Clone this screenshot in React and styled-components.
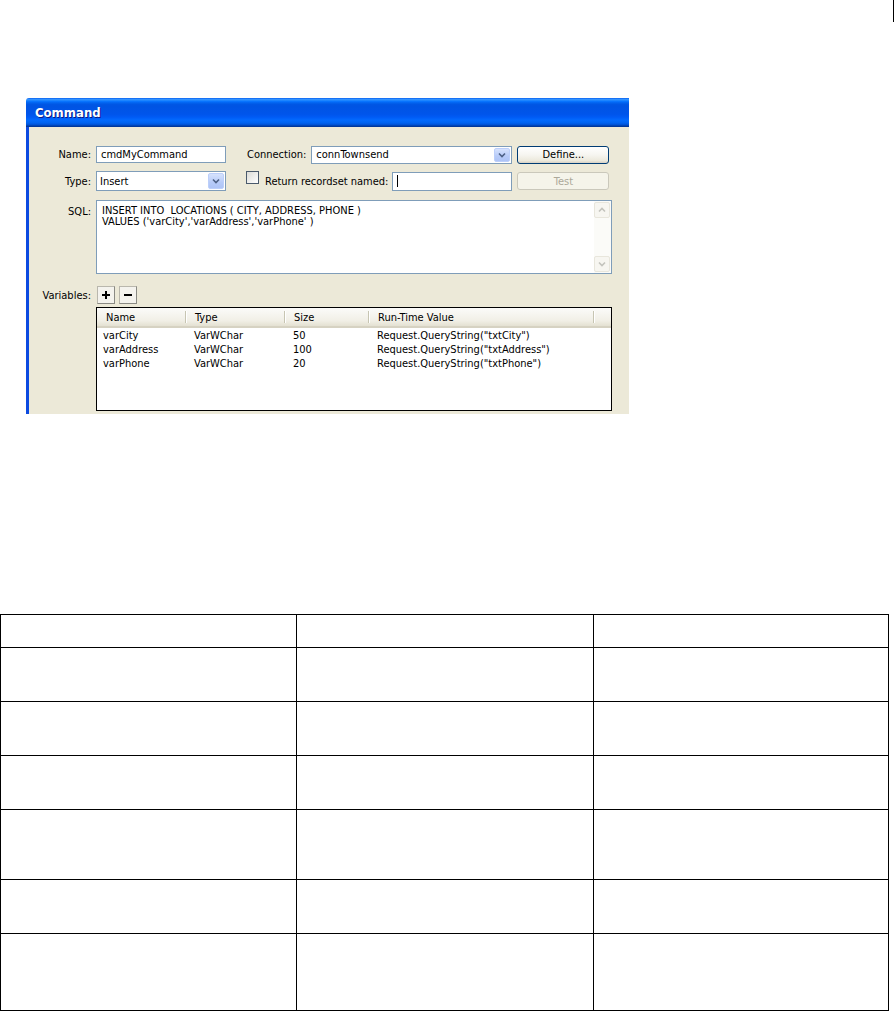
import React from "react";
import styled, { createGlobalStyle } from "styled-components";

const GlobalStyle = createGlobalStyle`
  html, body { margin: 0; padding: 0; background: #ffffff; }
  body { font-family: "DejaVu Sans Condensed", "DejaVu Sans", sans-serif; font-stretch: semi-condensed; }
  #root { width: 895px; }
`;

const UI_FONT = `"DejaVu Sans Condensed", "DejaVu Sans", sans-serif`;

const Page = styled.div`
  width: 895px;
  display: flex;
  flex-direction: column;
`;

const EdgeMark = styled.div`
  width: 1px;
  height: 22px;
  margin-left: 893px;
  background: #000;
`;

const Dialog = styled.div`
  width: 603px;
  margin: 76px 0 0 26px;
  display: flex;
  flex-direction: column;
  font-family: ${UI_FONT};
  font-size: 11px;
  color: #000;
`;

const TitleBar = styled.div`
  height: 29px;
  border-top-left-radius: 3px;
  display: flex;
  align-items: center;
  padding-left: 9px;
  color: #fff;
  font-weight: bold;
  font-size: 13px;
  text-shadow: 1px 1px 0 #0a1883;
  background: linear-gradient(
    #0058ee 0%, #3593ff 4%, #288eff 7%, #127dff 10%, #036ffc 13%,
    #0262ee 17%, #0057e5 22%, #0054e3 28%, #0055eb 56%, #005bf5 66%,
    #026afe 76%, #0062ef 86%, #0052d6 92%, #0040ab 96%, #003092 100%
  );
`;

const DialogBody = styled.div`
  background: #ece9d8;
  border-left: 3px solid #0c4ae0;
  padding: 18px 0 3px 0;
  display: flex;
  flex-direction: column;
`;

const FormRow = styled.div`
  display: flex;
  align-items: ${(p) => p.$align || "center"};
  height: ${(p) => p.$h}px;
  margin-top: ${(p) => p.$mt || 0}px;
`;

const FieldLabel = styled.div`
  width: 62px;
  margin-right: 5px;
  text-align: right;
  white-space: nowrap;
  padding-top: ${(p) => p.$pt || 0}px;
  flex: none;
`;

const InlineLabel = styled.div`
  margin-left: ${(p) => p.$ml || 0}px;
  margin-right: ${(p) => p.$mr || 5}px;
  white-space: nowrap;
  flex: none;
`;

const TextBox = styled.div`
  box-sizing: border-box;
  width: ${(p) => p.$w}px;
  height: ${(p) => p.$h}px;
  border: 1px solid #7f9db9;
  background: #fff;
  display: flex;
  align-items: center;
  padding-left: 4px;
  white-space: nowrap;
  flex: none;
`;

const Caret = styled.span`
  display: inline-block;
  width: 1px;
  height: 12px;
  background: #000;
`;

const SelectBox = styled.div`
  box-sizing: border-box;
  width: ${(p) => p.$w}px;
  height: ${(p) => p.$h}px;
  border: 1px solid #7f9db9;
  background: #fff;
  display: flex;
  align-items: center;
  padding: 1px;
  flex: none;
`;

const SelectText = styled.div`
  flex: 1;
  padding-left: ${(p) => p.$pl || 2}px;
  white-space: nowrap;
`;

const DropButton = styled.div`
  width: 16px;
  align-self: stretch;
  box-sizing: border-box;
  border: 1px solid #bccffa;
  border-radius: 2px;
  background: linear-gradient(#d6e2fd, #b7cbf8 60%, #aec4f6);
  display: flex;
  align-items: center;
  justify-content: center;
`;

const PushButton = styled.div`
  box-sizing: border-box;
  width: 92px;
  height: ${(p) => p.$h || 18}px;
  margin-left: 5px;
  border-radius: 3px;
  border: 1px solid ${(p) => (p.$disabled ? "#cac8bb" : "#003c74")};
  background: ${(p) =>
    p.$disabled
      ? "#f5f4ea"
      : "linear-gradient(#ffffff, #f6f5f0 50%, #ece9dc 85%, #d6d0c5)"};
  color: ${(p) => (p.$disabled ? "#aca899" : "#000")};
  display: flex;
  align-items: center;
  justify-content: center;
  flex: none;
`;

const CheckBox = styled.div`
  box-sizing: border-box;
  width: 13px;
  height: 13px;
  margin-left: ${(p) => p.$ml || 0}px;
  margin-right: 6px;
  border: 1px solid #4a5a6c;
  background: linear-gradient(135deg, #dcdcd7, #ffffff);
  flex: none;
  align-self: flex-start;
`;

const TextArea = styled.div`
  box-sizing: border-box;
  width: 516px;
  height: 74px;
  border: 1px solid #7f9db9;
  background: #fff;
  display: flex;
  flex: none;
`;

const AreaText = styled.div`
  flex: 1;
  padding: 4px 0 0 5px;
  line-height: 11px;
  white-space: pre;
`;

const ScrollTrack = styled.div`
  width: 17px;
  background: #fbfbf8;
  display: flex;
  flex-direction: column;
  justify-content: space-between;
  padding: 1px 1px 1px 0;
  box-sizing: border-box;
`;

const ScrollBtn = styled.div`
  height: 16px;
  box-sizing: border-box;
  border: 1px solid #e8e6dc;
  border-radius: 2px;
  background: #f7f6f1;
  display: flex;
  align-items: center;
  justify-content: center;
`;

const SmallButton = styled.div`
  box-sizing: border-box;
  width: 18px;
  height: 18px;
  margin-left: ${(p) => p.$ml || 0}px;
  border: 1px solid #8a8a84;
  border-top-color: #b9b7ad;
  border-left-color: #b9b7ad;
  background: #f4f3ee;
  display: flex;
  align-items: center;
  justify-content: center;
  flex: none;
`;

const ListView = styled.div`
  box-sizing: border-box;
  width: 516px;
  height: 104px;
  margin: 3px 0 0 67px;
  border: 1px solid #000;
  background: #fff;
  display: flex;
  flex-direction: column;
`;

const ListHeader = styled.div`
  display: flex;
  height: 20px;
  box-sizing: border-box;
  background: linear-gradient(#fbfbf9, #f1efe6 70%, #e4e1d2);
  border-bottom: 2px solid #d6d2c2;
`;

const HeadCell = styled.div`
  width: ${(p) => p.$w}px;
  box-sizing: border-box;
  padding-left: ${(p) => p.$pl || 9}px;
  display: flex;
  align-items: center;
  position: relative;
  white-space: nowrap;
  flex: none;
  &::after {
    content: "";
    display: ${(p) => (p.$last ? "none" : "block")};
    position: absolute;
    right: 0;
    top: 3px;
    bottom: 3px;
    width: 1px;
    background: #c7c5b2;
    box-shadow: 1px 0 0 #fff;
  }
`;

const ListRow = styled.div`
  display: flex;
  height: 14px;
  align-items: center;
`;

const Cell = styled.div`
  width: ${(p) => p.$w}px;
  box-sizing: border-box;
  padding-left: ${(p) => p.$pl || 7}px;
  white-space: nowrap;
  flex: none;
`;

const DocTable = styled.table`
  width: 888px;
  margin-top: 200px;
  border-collapse: collapse;
  table-layout: fixed;
  font-family: "Liberation Serif", serif;
`;

const DocRow = styled.tr`
  height: ${(p) => p.$h}px;
`;

const DocCell = styled.td`
  border: 1px solid #000;
  padding: 0;
`;

const Chevron = ({ color = "#4d6185", up = false, size = 8 }) => (
  <svg width={size} height={size} viewBox="0 0 8 8">
    <path
      d={up ? "M1 5.5 L4 2.5 L7 5.5" : "M1 2.5 L4 5.5 L7 2.5"}
      fill="none"
      stroke={color}
      strokeWidth="1.6"
    />
  </svg>
);

const PlusIcon = () => (
  <svg width="10" height="10" viewBox="0 0 10 10">
    <path d="M5 1 V9 M1 5 H9" stroke="#000" strokeWidth="2" />
  </svg>
);

const MinusIcon = () => (
  <svg width="10" height="10" viewBox="0 0 10 10">
    <path d="M1 5 H9" stroke="#000" strokeWidth="2" />
  </svg>
);

const columns = [
  { key: "name", title: "Name", w: 89 },
  { key: "type", title: "Type", w: 99 },
  { key: "size", title: "Size", w: 84 },
  { key: "value", title: "Run-Time Value", w: 225 },
];

const variables = [
  { name: "varCity", type: "VarWChar", size: "50", value: 'Request.QueryString("txtCity")' },
  { name: "varAddress", type: "VarWChar", size: "100", value: 'Request.QueryString("txtAddress")' },
  { name: "varPhone", type: "VarWChar", size: "20", value: 'Request.QueryString("txtPhone")' },
];

const docRowHeights = [33, 54, 54, 54, 70, 54, 77];

export default function App() {
  return (
    <>
      <GlobalStyle />
      <Page>
        <EdgeMark />
        <Dialog>
          <TitleBar>Command</TitleBar>
          <DialogBody>
            <FormRow $h={19}>
              <FieldLabel>Name:</FieldLabel>
              <TextBox $w={130} $h={17}>cmdMyCommand</TextBox>
              <InlineLabel $ml={21}>Connection:</InlineLabel>
              <SelectBox $w={201} $h={18}>
                <SelectText $pl={3}>connTownsend</SelectText>
                <DropButton>
                  <Chevron />
                </DropButton>
              </SelectBox>
              <PushButton>Define...</PushButton>
            </FormRow>
            <FormRow $h={20} $mt={7}>
              <FieldLabel>Type:</FieldLabel>
              <SelectBox $w={130} $h={20}>
                <SelectText>Insert</SelectText>
                <DropButton>
                  <Chevron />
                </DropButton>
              </SelectBox>
              <CheckBox $ml={20} />
              <InlineLabel $mr={4}>Return recordset named:</InlineLabel>
              <TextBox $w={120} $h={19}>
                <Caret />
              </TextBox>
              <PushButton $disabled>Test</PushButton>
            </FormRow>
            <FormRow $h={74} $mt={9} $align="flex-start">
              <FieldLabel $pt={5}>SQL:</FieldLabel>
              <TextArea>
                <AreaText>
                  {"INSERT INTO  LOCATIONS ( CITY, ADDRESS, PHONE )\nVALUES ('varCity','varAddress','varPhone' )"}
                </AreaText>
                <ScrollTrack>
                  <ScrollBtn>
                    <Chevron up color="#c3c3bd" />
                  </ScrollBtn>
                  <ScrollBtn>
                    <Chevron color="#c3c3bd" />
                  </ScrollBtn>
                </ScrollTrack>
              </TextArea>
            </FormRow>
            <FormRow $h={18} $mt={12}>
              <FieldLabel>Variables:</FieldLabel>
              <SmallButton $ml={1}>
                <PlusIcon />
              </SmallButton>
              <SmallButton $ml={4}>
                <MinusIcon />
              </SmallButton>
            </FormRow>
            <ListView>
              <ListHeader>
                {columns.map((c) => (
                  <HeadCell key={c.key} $w={c.w}>
                    {c.title}
                  </HeadCell>
                ))}
                <HeadCell $w={17} $last />
              </ListHeader>
              {variables.map((v) => (
                <ListRow key={v.name}>
                  {columns.map((c) => (
                    <Cell key={c.key} $w={c.w} $pl={c.key === "name" ? 6 : 8}>
                      {v[c.key]}
                    </Cell>
                  ))}
                </ListRow>
              ))}
            </ListView>
          </DialogBody>
        </Dialog>
        <DocTable>
          <colgroup>
            <col style={{ width: 296 }} />
            <col style={{ width: 297 }} />
            <col style={{ width: 295 }} />
          </colgroup>
          <tbody>
            {docRowHeights.map((h, i) => (
              <DocRow key={i} $h={h}>
                <DocCell />
                <DocCell />
                <DocCell />
              </DocRow>
            ))}
          </tbody>
        </DocTable>
      </Page>
    </>
  );
}
